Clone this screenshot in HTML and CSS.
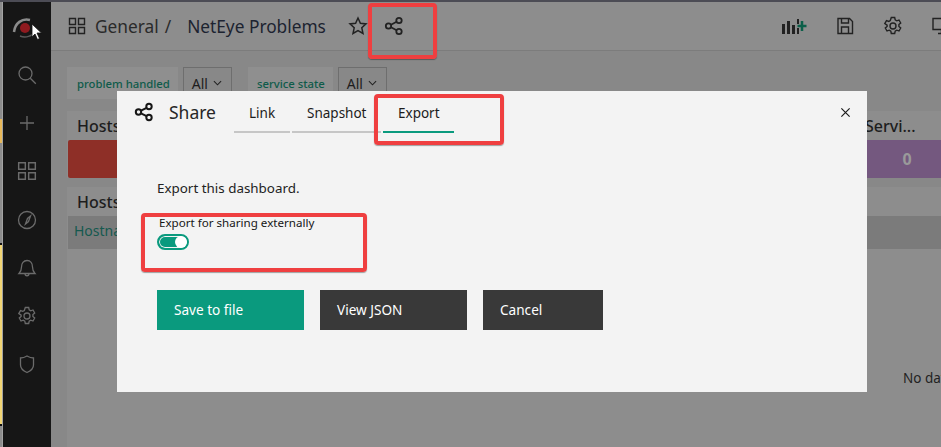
FILE: index.html
```html
<!DOCTYPE html>
<html lang="en">
<head>
    <meta charset="UTF-8">
    <title>NetEye Problems</title>
    <link rel="stylesheet" href="styles.css">
</head>
<body>
<svg class="defs" width="0" height="0">
    <symbol id="i-share" viewBox="0 0 20 20">
        <circle cx="4.5" cy="10" r="2.7"/>
        <circle cx="15" cy="4.5" r="2.7"/>
        <circle cx="15" cy="15.5" r="2.7"/>
        <path d="M7 8.7 12.6 5.8M7 11.3l5.6 2.9"/>
    </symbol>
    <symbol id="i-grid" viewBox="0 0 18 18">
        <path d="M1.5 1.5h6v6h-6zM10.5 1.5h6v6h-6zM1.5 10.5h6v6h-6zM10.5 10.5h6v6h-6z"/>
    </symbol>
    <symbol id="i-gear" viewBox="0 0 20 20">
        <circle cx="10" cy="10" r="3"/>
        <path d="M8.3 1.5h3.4l.5 2.4 1.500.9 2.300-.8 1.700 3-1.800 1.600v1.800l1.800 1.600-1.700 3-2.300-.8-1.500.9-.5 2.400H8.300l-.5-2.400-1.500-.9-2.300.8-1.700-3 1.800-1.600V9.200L1.800 7.600l1.700-3 2.300.8 1.500-.9z"/>
    </symbol>
</svg>

<div class="screen">
    <div class="desktop">
        <div class="desk-gray first"></div>
        <div class="desk-yellow short"></div>
        <div class="desk-gray mid"></div>
        <div class="desk-yellow tall"></div>
        <div class="desk-gray last"></div>
    </div>

    <nav class="sidebar">
        <svg class="logo" viewBox="0 0 28 24">
            <path class="logo-arc" d="M2 16C3 7 10 2 18 4"/>
            <path class="logo-arc thin" d="M8 20c5 2 12 1 17-6"/>
            <circle class="logo-dot" cx="13" cy="12" r="5"/>
        </svg>
        <svg class="side-icon" viewBox="0 0 20 20"><circle cx="8.5" cy="8.5" r="6.5"/><path d="m13.3 13.3 5.500 5.500"/></svg>
        <svg class="side-icon" viewBox="0 0 20 20"><path d="M10 3v14M3 10h14"/></svg>
        <svg class="side-icon"><use href="#i-grid"/></svg>
        <svg class="side-icon" viewBox="0 0 20 20"><circle cx="10" cy="10" r="8.5"/><path d="m13.5 6-2 5.500-3 2.500 2-5.500z"/></svg>
        <svg class="side-icon" viewBox="0 0 20 20"><path d="M2 15.500h16c-2-2-2.500-3.500-2.500-6.500 0-3.500-2-6.500-5.500-6.500S4.500 5.500 4.500 9c0 3-.5 4.500-2.500 6.500zM8 15.500c0 3 4 3 4 0"/></svg>
        <svg class="side-icon"><use href="#i-gear"/></svg>
        <svg class="side-icon" viewBox="0 0 20 20"><path d="M3.5 4c2.500 0 4.500-.8 6.500-2 2 1.200 4 2 6.500 2v7c0 3.500-3 6-6.500 7.500C6.500 17 3.500 14.500 3.500 11z"/></svg>
    </nav>

    <main class="main">
        <header class="topbar">
            <svg class="top-icon grid-icon"><use href="#i-grid"/></svg>
            <span class="crumb">General</span>
            <span class="crumb slash">/</span>
            <span class="crumb title">NetEye Problems</span>
            <svg class="top-icon star" viewBox="0 0 20 20"><path d="m10 2 2.400 5.300 5.600.6-4.200 3.900 1.200 5.700L10 14.600l-5 2.900 1.200-5.700L2 7.900l5.600-.6z"/></svg>
            <svg class="top-icon share"><use href="#i-share"/></svg>
            <div class="top-actions">
                <svg class="top-icon add-panel" viewBox="0 0 26 20">
                    <path class="bars" d="M1 8h3v10H1zM6 5h3v13H6zM11 9h3v9h-3zM16 3h2v5h-2zM16 12h2v6h-2z"/>
                    <path class="plus" d="M21 5v10M16.5 10h9"/>
                </svg>
                <svg class="top-icon" viewBox="0 0 20 20"><path d="M3 2.500h11.500l3 3V17.500H3zM6.500 2.500v4.500h7V2.500M6.500 17.500V11h7v6.500"/></svg>
                <svg class="top-icon"><use href="#i-gear"/></svg>
                <svg class="top-icon" viewBox="0 0 20 20"><path d="M2 2.500h17v11H2zM10.500 13.500v4M7 17.500h7"/></svg>
            </div>
        </header>

        <section class="content">
            <div class="variables">
                <span class="var-label">problem handled</span>
                <span class="var-select">All <svg class="chev" viewBox="0 0 10 6"><path d="m1 1 4 4 4-4"/></svg></span>
                <span class="var-label second">service state</span>
                <span class="var-select">All <svg class="chev" viewBox="0 0 10 6"><path d="m1 1 4 4 4-4"/></svg></span>
            </div>

            <div class="stat-row">
                <div class="panel stat">
                    <h3 class="panel-title">Hosts</h3>
                    <div class="stat-value red">0</div>
                </div>
                <div class="panel stat right">
                    <h3 class="panel-title">Servi...</h3>
                    <div class="stat-value purple">0</div>
                </div>
            </div>

            <div class="panel table">
                <h3 class="panel-title">Hosts</h3>
                <div class="table-head">Hostname</div>
                <div class="no-data">No data</div>
            </div>
        </section>
    </main>

    <div class="modal">
        <div class="modal-head">
            <svg class="modal-icon"><use href="#i-share"/></svg>
            <span class="modal-title">Share</span>
            <div class="tabs">
                <span class="tab link">Link</span>
                <span class="tab snapshot">Snapshot</span>
                <span class="tab export active">Export</span>
            </div>
            <svg class="close" viewBox="0 0 12 12"><path d="m1.500 1.500 9 9M10.500 1.500l-9 9"/></svg>
        </div>
        <div class="modal-body">
            <p class="lead">Export this dashboard.</p>
            <div class="switch-label">Export for sharing externally</div>
            <div class="switch"><span class="knob"></span></div>
            <div class="buttons">
                <button class="btn primary">Save to file</button>
                <button class="btn dark">View JSON</button>
                <button class="btn dark cancel">Cancel</button>
            </div>
        </div>
    </div>

    <!-- red marks drawn on the screenshot -->
    <div class="mark mark-share"></div>
    <div class="mark mark-export"></div>
    <div class="mark mark-switch"></div>

    <svg class="cursor" viewBox="0 0 12 18"><path d="M1 1v13l3-3 2.500 5.500 2-1L6 10h4.500z"/></svg>
</div>
</body>
</html>
```

FILE: styles.css
```css
* {
    box-sizing: border-box;
}

html, body {
    margin: 0;
    padding: 0;
}

body {
    font-family: "Noto Sans", "Open Sans", sans-serif;
    color: #1d1d1d;
}

.defs {
    position: absolute;
}

.screen {
    position: relative;
    display: flex;
    width: 941px;
    height: 447px;
    overflow: hidden;
    border-top: 2px solid #4c4c55;
    background-color: #8c8c8c;
}

/* other window peeking out on the left */
.desktop {
    width: 3px;
    display: flex;
    flex-direction: column;
    border-right: 1px solid #a3a3a3;
    background-color: #8c8c8c;
}

.desk-gray.first {
    height: 117px;
}

.desk-yellow.short {
    height: 24px;
    background-color: #e8b95a;
}

.desk-gray.mid {
    height: 100px;
}

.desk-yellow.tall {
    height: 183px;
    border-top: 2px solid #111;
    border-bottom: 2px solid #111;
    background-color: #f2d675;
}

.desk-gray.last {
    flex: 1;
}

.sidebar {
    width: 48px;
    display: flex;
    flex-direction: column;
    align-items: center;
    padding-top: 14px;
    background-color: #161616;
}

.logo {
    width: 28px;
    height: 24px;
    margin-bottom: 25px;
    margin-left: -2px;
    fill: none;
}

.logo-arc {
    stroke: #8b8b8b;
    stroke-width: 2.5;
}

.logo-arc.thin {
    stroke: #5a5a5a;
    stroke-width: 1.5;
}

.logo-dot {
    fill: #8f1a1f;
}

.side-icon {
    width: 20px;
    height: 20px;
    margin-bottom: 28.2px;
    fill: none;
    stroke: #6b6b6b;
    stroke-width: 1.3;
}

.main {
    flex: 1;
    min-width: 0;
    display: flex;
    flex-direction: column;
}

.topbar {
    height: 49px;
    display: flex;
    align-items: center;
    padding: 0 0 0 17px;
    border-bottom: 1px solid #7c7c7c;
    background-color: #8d8d8d;
    white-space: nowrap;
}

.top-icon {
    width: 20px;
    height: 20px;
    flex: none;
    fill: none;
    stroke: #222;
    stroke-width: 1.4;
}

.grid-icon {
    width: 18px;
    height: 18px;
}

.crumb {
    font-size: 17.3px;
    color: #2a2a2a;
    margin-left: 9px;
}

.crumb.slash {
    margin-left: 6px;
}

.crumb.title {
    margin-left: 16px;
    color: #1c2330;
}

.star {
    margin-left: 22px;
    stroke-width: 1.5;
}

.share {
    margin-left: 16px;
    stroke-width: 1.8;
}

.top-actions {
    margin-left: auto;
    margin-right: -10px;
    display: flex;
    align-items: center;
    gap: 28px;
}

.add-panel {
    width: 26px;
}

.bars {
    fill: #222;
    stroke: none;
}

.plus {
    stroke: #0c5f49;
    stroke-width: 2.5;
}

.content {
    flex: 1;
    padding: 16px 0 0 16px;
    background-color: #888;
}

.variables {
    display: flex;
    align-items: stretch;
    height: 32px;
    gap: 5px;
}

.var-label {
    display: flex;
    align-items: center;
    padding: 0 8px 0 10px;
    font-size: 11.3px;
    font-weight: 500;
    color: #0e5b4a;
    background-color: #8f8f8f;
}

.var-label.second {
    margin-left: 11px;
    padding: 0 8px 0 9px;
}

.var-select {
    display: flex;
    align-items: center;
    gap: 5px;
    padding: 0 9px 0 8px;
    font-size: 14px;
    border: 1px solid #6e6e6e;
}

.chev {
    width: 9px;
    height: 6px;
    fill: none;
    stroke: #222;
    stroke-width: 1.2;
}

.stat-row {
    display: flex;
    justify-content: space-between;
    margin-top: 12px;
}

.panel {
    background-color: #8d8d8d;
}

.stat {
    width: 200px;
}

/* runs past the window edge, so only part of it shows */
.stat.right {
    margin-right: -66px;
}

.stat.right .panel-title {
    padding-left: 58px;
}

.panel-title {
    height: 29px;
    margin: 0;
    padding: 5px 0 0 10px;
    font-size: 16px;
    font-weight: 500;
    line-height: 20px;
    color: #1d1d1d;
}

.stat-value {
    height: 38px;
    text-align: center;
    font-size: 16px;
    font-weight: 700;
    line-height: 38px;
    color: #9a9a9a;
    border-radius: 2px;
}

.red {
    background-color: #8e2f27;
    margin-left: 1px;
}

.purple {
    background-color: #74587f;
}

.table {
    margin-top: 9px;
    height: 260px;
}

.table-head {
    height: 33px;
    margin-left: 1px;
    padding: 5px 0 0 6px;
    font-size: 14px;
    line-height: 20px;
    color: #15594f;
    background-color: #7b7b7b;
}

.no-data {
    margin: 120px 0 0 836px;
    font-size: 13.5px;
    color: #222;
    white-space: nowrap;
}

/* modal over the dashboard */
.modal {
    position: absolute;
    left: 117px;
    top: 89px;
    width: 750px;
    height: 301px;
    background-color: #f3f3f3;
}

.modal-head {
    display: flex;
    align-items: flex-start;
    height: 44px;
    padding-left: 17px;
}

.modal-icon {
    width: 20px;
    height: 20px;
    margin-top: 11px;
    flex: none;
    fill: none;
    stroke: #161616;
    stroke-width: 2;
}

.modal-title {
    margin: 10px 0 0 15px;
    font-size: 17.5px;
    line-height: 22px;
    color: #262626;
}

.tabs {
    display: flex;
    gap: 2px;
    margin-left: 18px;
    height: 42px;
}

.tab {
    display: block;
    padding: 13px 0 0 15px;
    font-size: 13.5px;
    line-height: 18px;
    color: #1c1c1c;
    border-bottom: 2px solid #c6c6c6;
}

.tab.link {
    width: 56px;
}

.tab.snapshot {
    width: 89px;
}

.tab.export {
    width: 71px;
}

.tab.active {
    border-bottom-color: #0a9a7e;
}

.close {
    width: 11px;
    height: 11px;
    margin: 16px 16px 0 auto;
    fill: none;
    stroke: #1a1a1a;
    stroke-width: 1.3;
}

.modal-body {
    padding: 44px 0 0 40px;
}

.lead {
    margin: 0;
    font-size: 13.4px;
    line-height: 18px;
    color: #222;
}

.switch-label {
    margin: 18px 0 0 2px;
    font-size: 11.6px;
    line-height: 15px;
    color: #161616;
}

.switch {
    width: 32px;
    height: 16px;
    margin-top: 4px;
    display: flex;
    justify-content: flex-end;
    align-items: center;
    border: 2px solid #0a9a7e;
    border-radius: 8px;
    background-color: #0a9a7e;
    box-shadow: inset 0 0 0 1px #f3f3f3;
}

.knob {
    width: 12px;
    height: 12px;
    border-radius: 50%;
    background-color: #fff;
}

.buttons {
    display: flex;
    gap: 16px;
    margin-top: 40px;
}

.btn {
    width: 147px;
    height: 40px;
    padding: 0 0 2px 17px;
    border: none;
    text-align: left;
    font-family: inherit;
    font-size: 13.6px;
    color: #fff;
}

.primary {
    background-color: #0a9a7e;
}

.dark {
    background-color: #393939;
}

.cancel {
    width: 120px;
}

/* annotations */
.mark {
    position: absolute;
    border: 4px solid #ef3f40;
    border-radius: 4px;
    box-shadow: 0 1px 1px rgba(0, 0, 0, 0.35);
}

.mark-share {
    left: 368px;
    top: 1px;
    width: 69px;
    height: 56px;
}

.mark-export {
    left: 374px;
    top: 92px;
    width: 130px;
    height: 51px;
}

.mark-switch {
    left: 141px;
    top: 211px;
    width: 226px;
    height: 59px;
}

.cursor {
    position: absolute;
    left: 31px;
    top: 21px;
    width: 12px;
    height: 18px;
    fill: #fff;
    stroke: #111;
    stroke-width: 0.8;
}
```
